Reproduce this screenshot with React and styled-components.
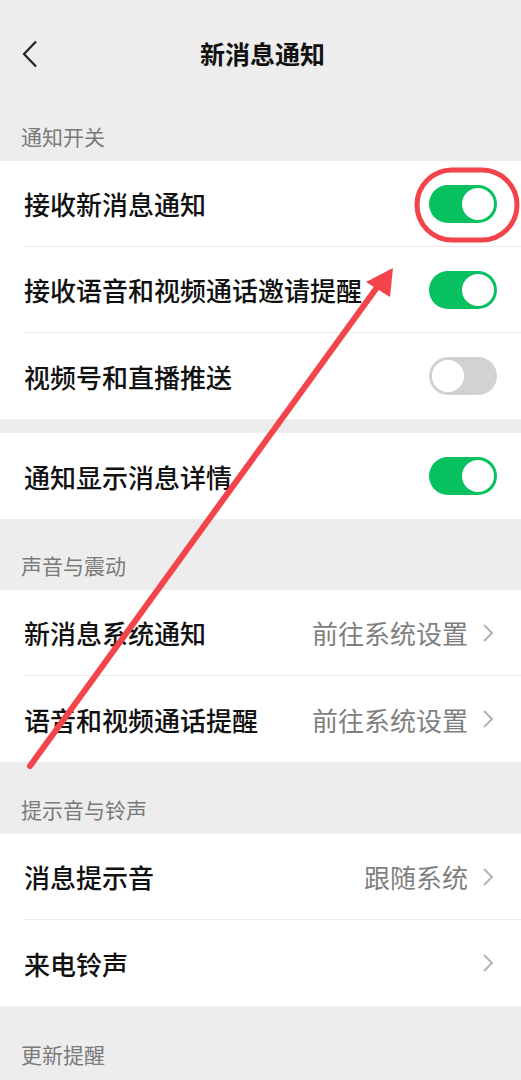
import React from 'react';
import styled, { createGlobalStyle } from 'styled-components';

const GlobalStyle = createGlobalStyle`
  html, body {
    margin: 0;
    padding: 0;
    background: #ededed;
  }
  body {
    font-family: "Noto Sans CJK SC", "Noto Sans", sans-serif;
  }
`;

const Page = styled.div`
  position: relative;
  width: 521px;
  height: 1080px;
  overflow: hidden;
  background: #ededed;
`;

const NavBar = styled.div`
  height: 108px;
  display: flex;
  align-items: center;
  justify-content: center;
  position: relative;
`;

const BackButton = styled.div`
  position: absolute;
  left: 18px;
  top: 36px;
  width: 24px;
  height: 36px;
  display: flex;
  align-items: center;
  justify-content: center;
`;

const Title = styled.div`
  font-size: 25px;
  font-weight: 700;
  color: #111;
  margin-top: -2px;
  margin-left: 4px;
`;

const SectionTitle = styled.div`
  height: ${(p) => p.$h}px;
  display: flex;
  align-items: flex-end;
  padding: 0 0 ${(p) => p.$pb || 10}px 21px;
  box-sizing: border-box;
  font-size: 21px;
  color: #7a7a7a;
`;

const Group = styled.div`
  background: #fff;
`;

const Spacer = styled.div`
  height: ${(p) => p.$h}px;
`;

const Row = styled.div`
  height: 86px;
  display: flex;
  align-items: center;
  margin-left: 24px;
  padding-right: ${(p) => (p.$arrow ? 26 : 24)}px;
  box-sizing: border-box;
  border-bottom: ${(p) => (p.$last ? 'none' : '1px solid #ececec')};
`;

const Label = styled.div`
  flex: 1;
  font-size: 26px;
  font-weight: 500;
  color: #111;
`;

const Value = styled.div`
  font-size: 26px;
  color: #7f7f7f;
  margin-right: 13px;
`;

const Track = styled.div`
  width: 68px;
  height: 38px;
  border-radius: 19px;
  background: ${(p) => (p.$on ? '#07c160' : '#d2d2d2')};
  position: relative;
`;

const Knob = styled.div`
  position: absolute;
  top: 3px;
  left: ${(p) => (p.$on ? '33px' : '3px')};
  width: 32px;
  height: 32px;
  border-radius: 50%;
  background: #fff;
`;

const Overlay = styled.svg`
  position: absolute;
  left: 0;
  top: 0;
  pointer-events: none;
`;

const Switch = ({ on }) => (
  <Track $on={on}>
    <Knob $on={on} />
  </Track>
);

const Chevron = () => (
  <svg width="14" height="20" viewBox="0 0 14 20">
    <path d="M3 2 L11 10 L3 18" fill="none" stroke="#b3b3b3" strokeWidth="2" />
  </svg>
);

export default function App() {
  return (
    <Page>
      <GlobalStyle />
      <NavBar>
        <BackButton>
          <svg width="16" height="28" viewBox="0 0 16 28">
            <path d="M14 1.5 L2 14 L14 26.5" fill="none" stroke="#222" strokeWidth="2.2" />
          </svg>
        </BackButton>
        <Title>新消息通知</Title>
      </NavBar>

      <SectionTitle $h={53} $pb={10}>通知开关</SectionTitle>
      <Group>
        <Row>
          <Label>接收新消息通知</Label>
          <Switch on />
        </Row>
        <Row>
          <Label>接收语音和视频通话邀请提醒</Label>
          <Switch on />
        </Row>
        <Row $last>
          <Label>视频号和直播推送</Label>
          <Switch />
        </Row>
      </Group>
      <Spacer $h={14} />
      <Group>
        <Row $last>
          <Label>通知显示消息详情</Label>
          <Switch on />
        </Row>
      </Group>

      <SectionTitle $h={71} $pb={10}>声音与震动</SectionTitle>
      <Group>
        <Row $arrow>
          <Label>新消息系统通知</Label>
          <Value>前往系统设置</Value>
          <Chevron />
        </Row>
        <Row $arrow $last>
          <Label>语音和视频通话提醒</Label>
          <Value>前往系统设置</Value>
          <Chevron />
        </Row>
      </Group>

      <SectionTitle $h={72} $pb={10}>提示音与铃声</SectionTitle>
      <Group>
        <Row $arrow>
          <Label>消息提示音</Label>
          <Value>跟随系统</Value>
          <Chevron />
        </Row>
        <Row $arrow $last>
          <Label>来电铃声</Label>
          <Chevron />
        </Row>
      </Group>

      <SectionTitle $h={74} $pb={11}>更新提醒</SectionTitle>

      <Overlay width="521" height="1080" viewBox="0 0 521 1080">
        <rect x="417" y="170" width="100" height="70" rx="35" ry="35" fill="none" stroke="#f2444a" strokeWidth="5" />
        <line x1="30" y1="766" x2="378" y2="286" stroke="#f2444a" strokeWidth="6" strokeLinecap="round" />
        <polygon points="393,268 366,282 390,297" fill="#f2444a" />
      </Overlay>
    </Page>
  );
}
